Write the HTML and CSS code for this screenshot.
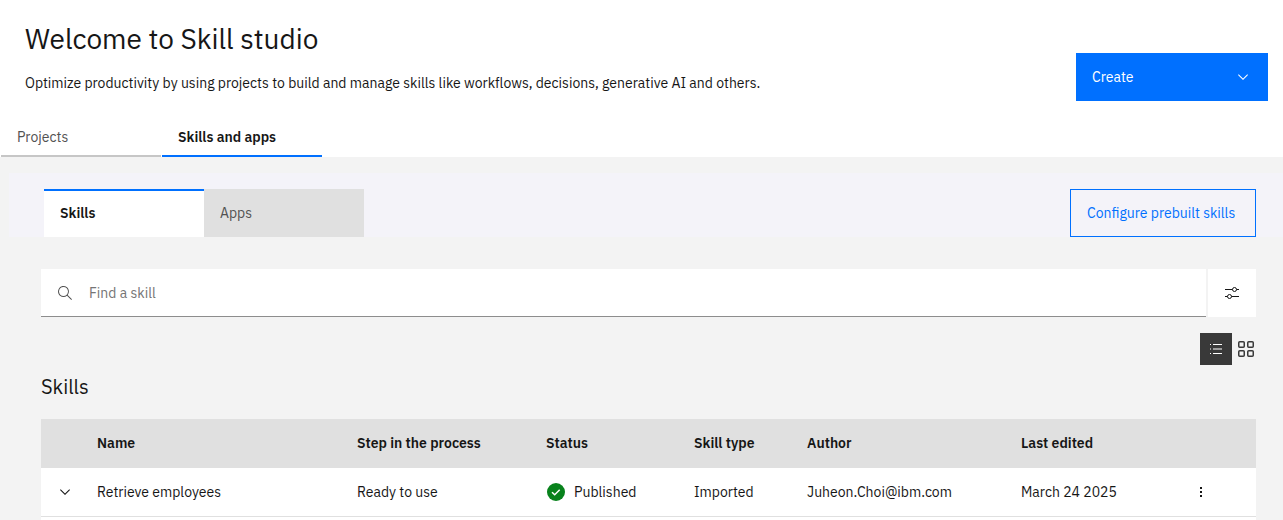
FILE: index.html
```html
<!DOCTYPE html>
<html lang="en">
<head>
<meta charset="utf-8">
<title>Skill studio</title>
<link rel="stylesheet" href="styles.css">
</head>
<body>
<header class="page-header">
  <div class="intro">
    <h1 class="title">Welcome to Skill studio</h1>
    <p class="description">Optimize productivity by using projects to build and manage skills like workflows, decisions, generative AI and others.</p>
  </div>
  <button class="create" type="button">Create
    <svg width="16" height="16" viewBox="0 0 16 16" fill="currentColor" aria-hidden="true"><path d="M8 11 3 6l.7-.7L8 9.600l4.300-4.300.7.7z"/></svg>
  </button>
</header>
<nav class="tabs" role="tablist" aria-label="Studio">
  <button class="tab" type="button" role="tab" aria-selected="false">Projects</button>
  <button class="tab tab-active" type="button" role="tab" aria-selected="true">Skills and apps</button>
</nav>
<main class="content">
  <div class="band">
    <div class="box-tabs" role="tablist" aria-label="Content type">
      <button class="box-tab box-tab-active" type="button" role="tab" aria-selected="true">Skills</button>
      <button class="box-tab" type="button" role="tab" aria-selected="false">Apps</button>
    </div>
    <button class="configure" type="button">Configure prebuilt skills</button>
  </div>
  <section class="listing">
    <div class="search-row">
      <label class="search">
        <svg width="16" height="16" viewBox="0 0 16 16" fill="currentColor" aria-hidden="true"><path d="M15 14.300 10.700 10c1.900-2.300 1.600-5.800-.7-7.700S4.200.7 2.300 3 .7 8.800 3 10.700c2 1.700 5 1.700 7 0l4.300 4.300zM2 6.500C2 4 4 2 6.500 2S11 4 11 6.500 9 11 6.500 11 2 9 2 6.500z"/></svg>
        <input class="search-input" type="text" placeholder="Find a skill" aria-label="Find a skill">
      </label>
      <button class="filter" type="button" aria-label="Filter">
        <svg width="16" height="16" viewBox="0 0 16 16" fill="none" stroke="currentColor" aria-hidden="true"><path d="M1 4.500h7.500M12.500 4.500H15M1 11.500h2.500M7.500 11.500H15"/><circle cx="10.500" cy="4.500" r="2"/><circle cx="5.500" cy="11.500" r="2"/></svg>
      </button>
    </div>
    <div class="views">
      <button class="view view-active" type="button" aria-label="List view" aria-pressed="true">
        <svg width="16" height="16" viewBox="0 0 16 16" fill="currentColor" aria-hidden="true"><path d="M5 3h9v1H5zM5 7.500h9v1H5zM5 12h9v1H5zM2 3h1v1H2zM2 7.500h1v1H2zM2 12h1v1H2z"/></svg>
      </button>
      <button class="view" type="button" aria-label="Grid view" aria-pressed="false">
        <svg width="20" height="20" viewBox="0 0 20 20" fill="none" stroke="currentColor" stroke-width="1.500" aria-hidden="true"><rect x="2.750" y="2.750" width="5.500" height="5.500" rx="1"/><rect x="11.750" y="2.750" width="5.500" height="5.500" rx="1"/><rect x="2.750" y="11.750" width="5.500" height="5.500" rx="1"/><rect x="11.750" y="11.750" width="5.500" height="5.500" rx="1"/></svg>
      </button>
    </div>
    <h2 class="subtitle">Skills</h2>
    <div class="table-wrap">
      <table class="table">
        <colgroup><col class="c-expand"><col class="c-name"><col class="c-step"><col class="c-status"><col class="c-type"><col class="c-author"><col class="c-edited"><col class="c-menu"></colgroup>
        <thead>
          <tr><th></th><th scope="col">Name</th><th scope="col">Step in the process</th><th scope="col">Status</th><th scope="col">Skill type</th><th scope="col">Author</th><th scope="col">Last edited</th><th></th></tr>
        </thead>
        <tbody>
          <tr>
            <td><button class="icon-button" type="button" aria-label="Expand row"><svg width="16" height="16" viewBox="0 0 16 16" fill="currentColor" aria-hidden="true"><path d="M8 11 3 6l.7-.7L8 9.600l4.300-4.300.7.7z"/></svg></button></td>
            <td>Retrieve employees</td>
            <td>Ready to use</td>
            <td><span class="status"><svg width="20" height="20" viewBox="0 0 20 20" aria-hidden="true"><circle class="status-dot" cx="10" cy="10" r="9"/><path d="m6 10.200 2.700 2.600 5-5" fill="none" stroke="#fff" stroke-width="1.500"/></svg>Published</span></td>
            <td>Imported</td>
            <td>Juheon.Choi@ibm.com</td>
            <td>March 24 2025</td>
            <td><button class="icon-button" type="button" aria-label="Row actions"><svg width="16" height="16" viewBox="0 0 16 16" fill="currentColor" aria-hidden="true"><path d="M7 3h2v2H7zM7 7h2v2H7zM7 11h2v2H7z"/></svg></button></td>
          </tr>
        </tbody>
      </table>
    </div>
  </section>
</main>
</body>
</html>
```
FILE: styles.css
```css
* {
  box-sizing: border-box;
}

body {
  margin: 0;
  min-height: 100vh;
  display: flex;
  flex-direction: column;
  background: #fff;
  color: #161616;
  font: 14px/18px "IBM Plex Sans", Roboto, "Noto Sans", sans-serif;
}

button,
input {
  font: inherit;
  color: inherit;
  border: 0;
  padding: 0;
  background: none;
  border-radius: 0;
}

svg {
  display: block;
  flex: none;
}

h1,
h2,
p {
  margin: 0;
  font-weight: 400;
}

.page-header {
  display: flex;
  justify-content: space-between;
  align-items: flex-end;
  padding: 21px 15px 16px 25px;
}

.title {
  font-size: 28px;
  line-height: 36px;
}

.description {
  margin: 17px 0 9px;
}

.create {
  display: flex;
  justify-content: space-between;
  align-items: center;
  width: 192px;
  height: 48px;
  padding: 0 17px 0 16px;
  background: #0070ff;
  color: #fff;
}

.tabs {
  display: flex;
  gap: 1px;
  padding-left: 1px;
}

.tab {
  width: 160px;
  height: 40px;
  padding: 2px 16px 0;
  text-align: left;
  color: #525252;
  border-bottom: 2px solid #c6c6c6;
}

.tab-active {
  color: #161616;
  font-weight: 600;
  border-color: #0070ff;
}

.content {
  flex: 1;
  display: flex;
  flex-direction: column;
  padding-top: 16px;
  background: #f3f3f3;
}

.band {
  display: flex;
  justify-content: space-between;
  margin-left: 9px;
  padding: 16px 27px 0 35px;
  background: #f4f3f9;
}

.box-tabs {
  display: flex;
}

.box-tab {
  width: 160px;
  height: 48px;
  padding: 0 16px;
  text-align: left;
  background: #e0e0e0;
  color: #525252;
}

.box-tab-active {
  background: #fff;
  color: #161616;
  font-weight: 600;
  box-shadow: inset 0 2px #0070ff;
}

.configure {
  height: 48px;
  width: 186px;
  padding-left: 16px;
  border: 1px solid #0070ff;
  color: #0070ff;
  text-align: left;
}

.listing {
  flex: 1;
  display: flex;
  flex-direction: column;
  padding: 32px 27px 0 41px;
}

.search-row {
  display: flex;
  gap: 2px;
}

.search {
  flex: 1;
  display: flex;
  align-items: center;
  gap: 16px;
  height: 48px;
  padding-left: 16px;
  background: #fff;
  border-bottom: 1px solid #8d8d8d;
  color: #525252;
}

.search-input {
  flex: 1;
  height: 46px;
  outline: 0;
}

.search-input::placeholder {
  color: #757575;
}

.filter {
  display: grid;
  place-items: center;
  width: 48px;
  height: 48px;
  background: #fff;
}

.views {
  display: flex;
  justify-content: flex-end;
  margin: 16px -4px 0 0;
}

.view {
  display: grid;
  place-items: center;
  width: 28px;
  height: 32px;
  color: #393939;
}

.view-active {
  width: 32px;
  background: #393939;
  color: #fff;
}

.subtitle {
  margin: 8px 0 18px;
  font-size: 20px;
  line-height: 28px;
}

.table-wrap {
  flex: 1;
  background: #fff;
}

.table {
  width: 100%;
  table-layout: fixed;
  border-collapse: separate;
  border-spacing: 0;
}

.table th,
.table td {
  height: 49px;
  padding: 0 0 0 16px;
  text-align: left;
  white-space: nowrap;
  border-bottom: 1px solid #e0e0e0;
}

.table th {
  background: #e0e0e0;
  font-weight: 600;
}

.c-expand { width: 40px; }
.c-name { width: 260px; }
.c-step { width: 189px; }
.c-status { width: 148px; }
.c-type { width: 113px; }
.c-author { width: 214px; }
.c-edited { width: 172px; }
.c-menu { width: 79px; }

.icon-button {
  display: grid;
  place-items: center;
  width: 16px;
  height: 16px;
}

.status {
  display: flex;
  align-items: center;
  gap: 8px;
}

.status-dot {
  fill: #08821c;
}
```
